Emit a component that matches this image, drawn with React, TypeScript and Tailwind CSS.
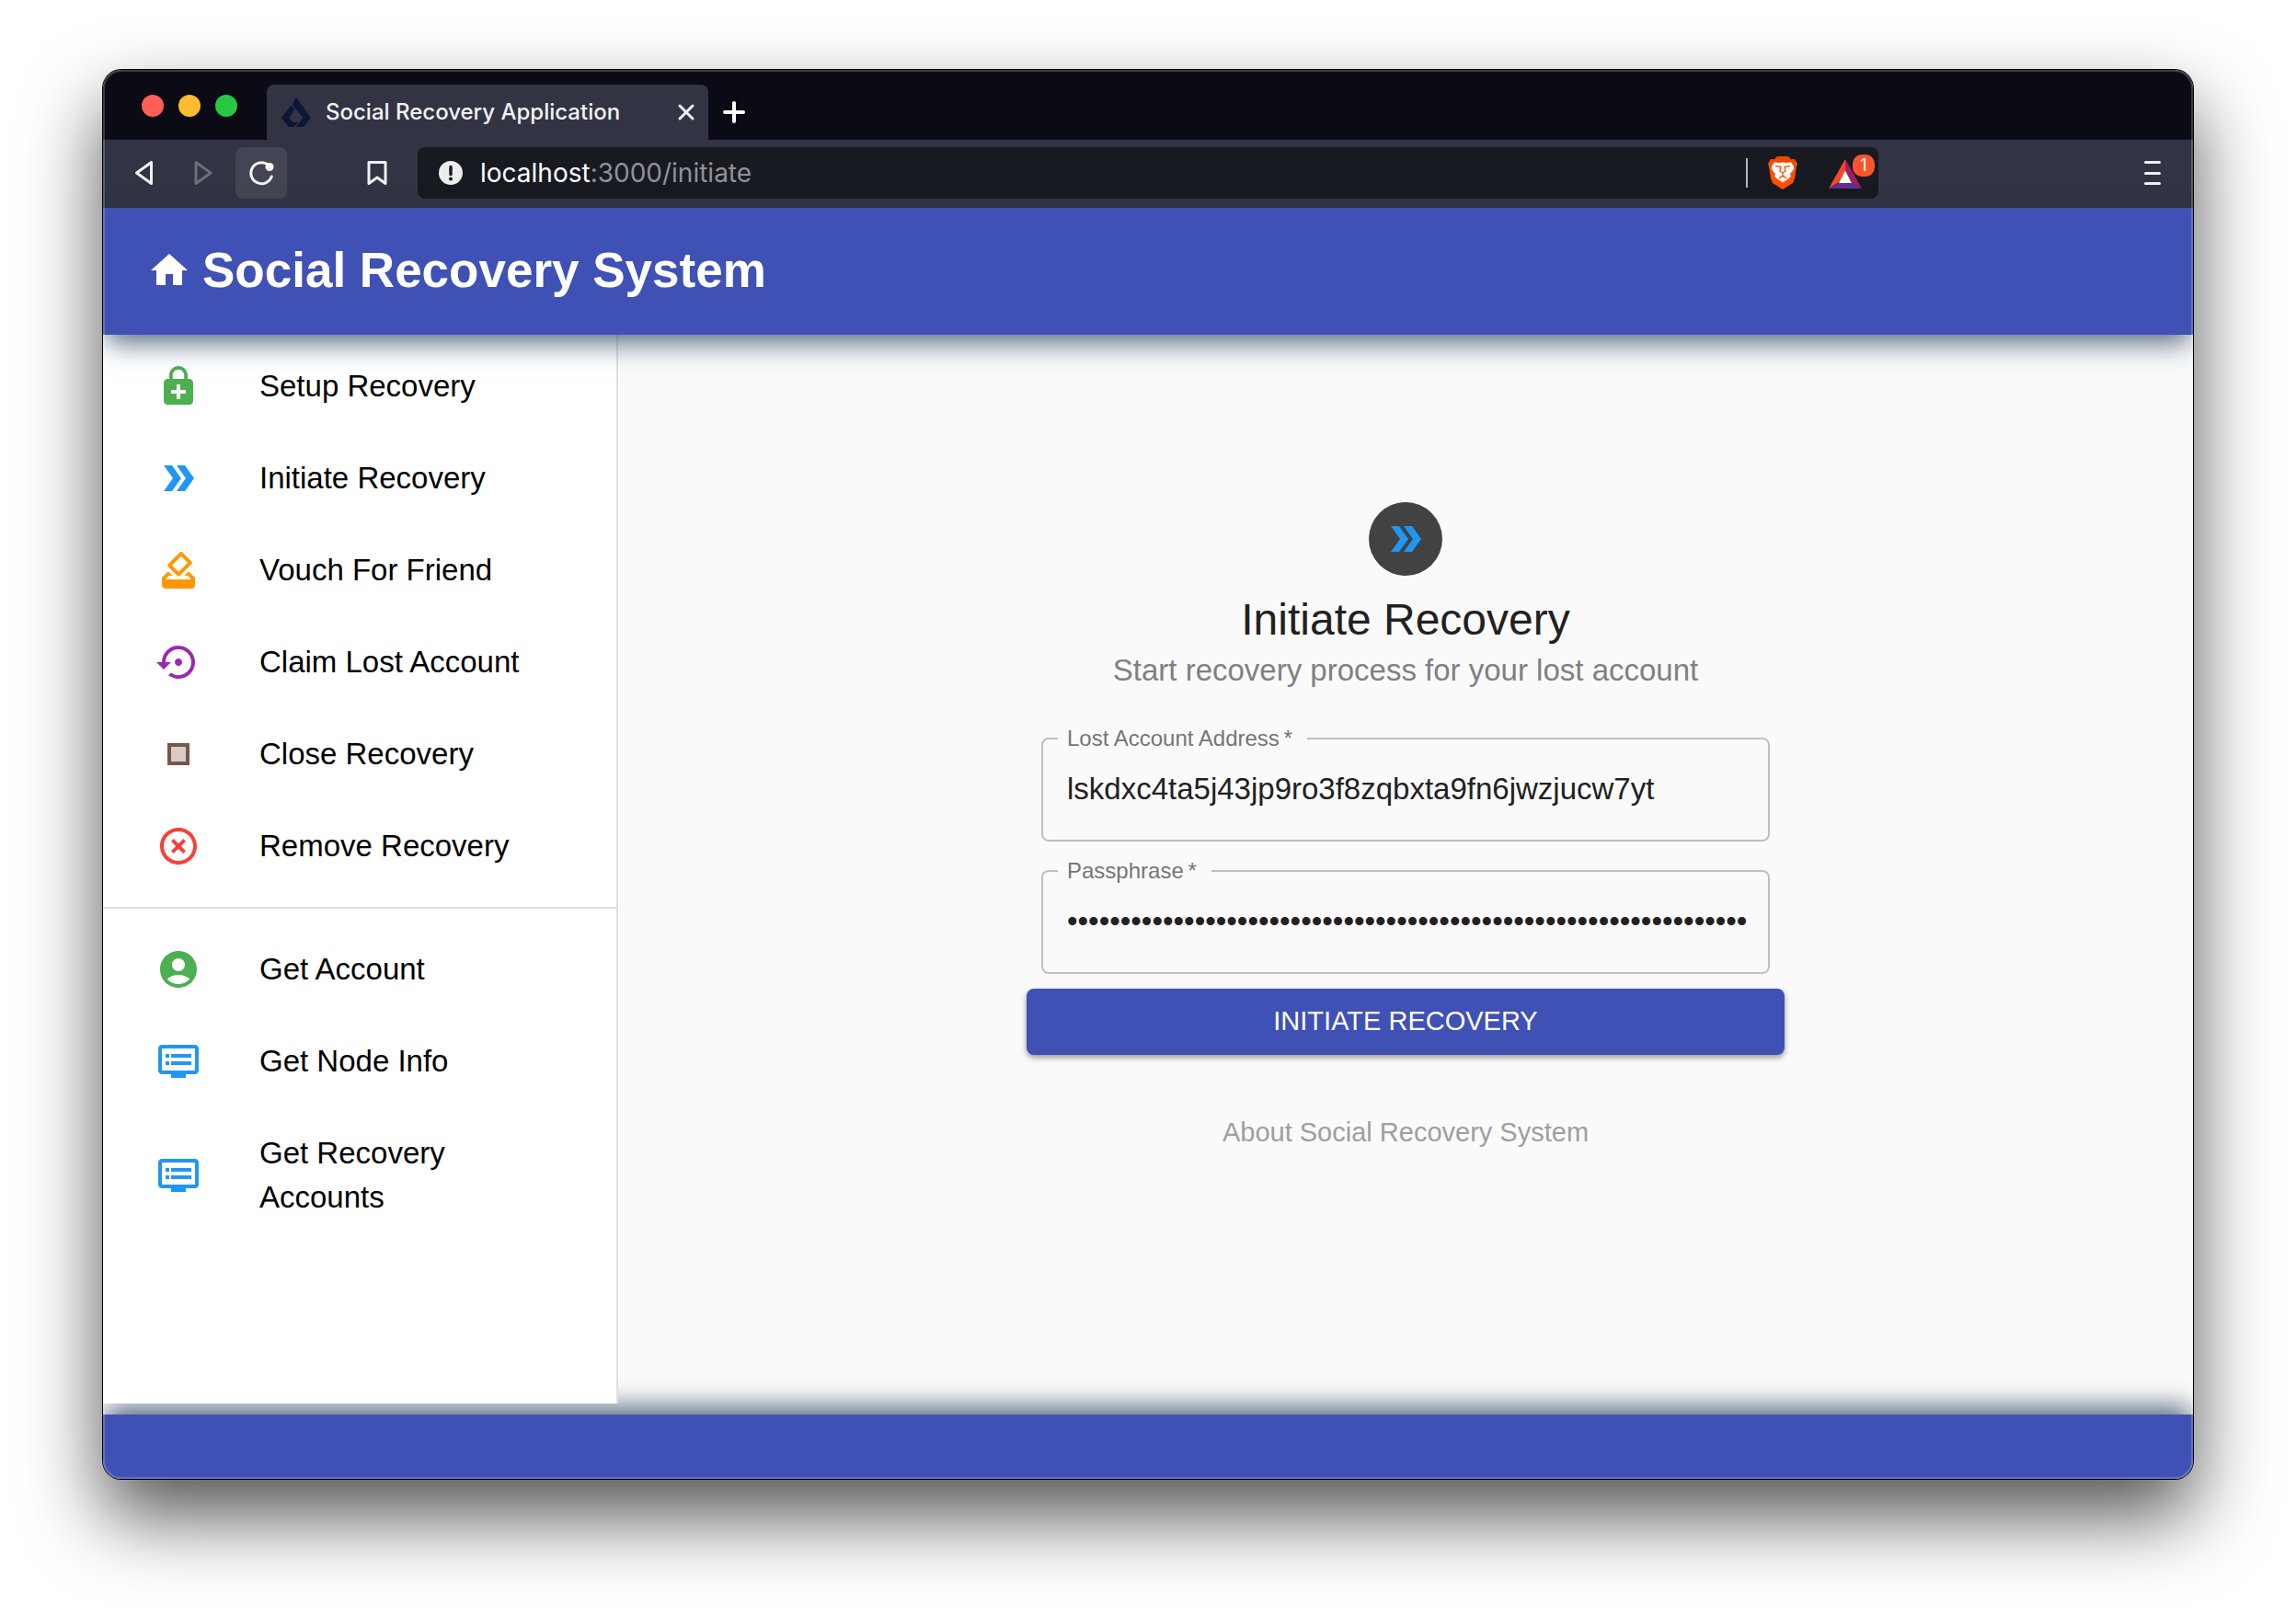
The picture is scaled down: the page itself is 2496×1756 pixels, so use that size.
import { type ReactNode } from "react";
import { MdHome, MdEnhancedEncryption, MdDoubleArrow, MdHowToVote, MdSettingsBackupRestore, MdHighlightOff, MdAccountCircle, MdDvr } from "react-icons/md";

function StopTwoTone() {
  return (
    <svg viewBox="0 0 24 24" className="size-12" aria-hidden="true">
      <path d="M8 8h8v8H8z" fill="#d7ccc8" />
      <path d="M6 18h12V6H6v12zM8 8h8v8H8V8z" fill="#795548" />
    </svg>
  );
}

const actions: { label: string; icon: ReactNode }[] = [
  { label: "Setup Recovery", icon: <MdEnhancedEncryption className="size-12 text-[#4caf50]" /> },
  { label: "Initiate Recovery", icon: <MdDoubleArrow className="size-12 text-[#2196f3]" /> },
  { label: "Vouch For Friend", icon: <MdHowToVote className="size-12 text-[#ff9800]" /> },
  { label: "Claim Lost Account", icon: <MdSettingsBackupRestore className="size-12 text-[#9c27b0]" /> },
  { label: "Close Recovery", icon: <StopTwoTone /> },
  { label: "Remove Recovery", icon: <MdHighlightOff className="size-12 text-[#f44336]" /> },
];

const queries: { label: string; icon: ReactNode }[] = [
  { label: "Get Account", icon: <MdAccountCircle className="size-12 text-[#4caf50]" /> },
  { label: "Get Node Info", icon: <MdDvr className="size-12 text-[#2196f3]" /> },
  { label: "Get Recovery Accounts", icon: <MdDvr className="size-12 text-[#2196f3]" /> },
];

function NavList({ items }: { items: { label: string; icon: ReactNode }[] }) {
  return (
    <ul>
      {items.map((item) => (
        <li key={item.label}>
          <a href="#" className="flex items-center py-[26px] pr-8 pl-[58px] text-[33px] leading-[48px] text-black">
            <span className="w-28 shrink-0">{item.icon}</span>
            <span className="max-w-[300px]">{item.label}</span>
          </a>
        </li>
      ))}
    </ul>
  );
}

function Field({ id, label, type, value }: { id: string; label: string; type: string; value: string }) {
  return (
    <fieldset className="h-[124px] rounded-lg border-2 border-[#bfbfbf] px-4">
      <legend className="h-6 pr-4 pl-[10px] text-2xl leading-6 text-[#757575]">
        <label htmlFor={id}>{label}&thinsp;*</label>
      </legend>
      <input
        id={id}
        type={type}
        defaultValue={value}
        className="h-[86px] w-full bg-transparent pl-[10px] text-[33px] text-[#212121] outline-none"
      />
    </fieldset>
  );
}

function TabStrip() {
  return (
    <div className="flex h-[76px] items-end bg-[#0b0b15]">
      <div className="flex w-[178px] shrink-0 gap-4 self-center pt-0.5 pl-[42px]">
        <button aria-label="Close window" className="size-6 rounded-full bg-[#ff5f57]" />
        <button aria-label="Minimize window" className="size-6 rounded-full bg-[#febc2e]" />
        <button aria-label="Zoom window" className="size-6 rounded-full bg-[#28c840]" />
      </div>
      <div className="flex h-[60px] w-[480px] items-center rounded-t-lg bg-[#323443] pr-3 pl-4">
        <svg viewBox="0 0 32 32" className="size-8" fill="#0b1638" aria-hidden="true">
          <path d="M10 9L0 22l8 10h5.500l5-5H12.500L8.500 22l6-9.500z" />
          <path d="M16 0l16 22-8 10h-8.500L23.500 22 11.500 7.500z" />
        </svg>
        <span className="ml-4 grow font-[Inter] text-2xl font-medium text-[#f2f2f4]">Social Recovery Application</span>
        <button aria-label="Close tab" className="flex size-6 items-center justify-center">
          <svg viewBox="0 0 24 24" className="size-6" stroke="#f2f2f4" strokeWidth="3" strokeLinecap="round" aria-hidden="true">
            <path d="M5 5l14 14M19 5L5 19" />
          </svg>
        </button>
      </div>
      <button aria-label="New tab" className="mb-[18px] ml-4 size-6">
        <svg viewBox="0 0 24 24" className="size-6" stroke="#fff" strokeWidth="4" strokeLinecap="round" aria-hidden="true">
          <path d="M12 2v20M2 12h20" />
        </svg>
      </button>
    </div>
  );
}

function Toolbar() {
  return (
    <div className="flex h-[74px] items-center bg-[#323443] pr-[35px] pb-0.5 pl-[30px]">
      <button aria-label="Back" className="size-[30px]">
        <svg viewBox="0 0 30 30" className="size-[30px]" fill="none" stroke="#f0f0f2" strokeWidth="3" strokeLinejoin="round" aria-hidden="true">
          <path d="M22.500 3.500v23L6.500 15z" />
        </svg>
      </button>
      <button aria-label="Forward" disabled className="ml-[34px] size-[30px]">
        <svg viewBox="0 0 30 30" className="size-[30px]" fill="none" stroke="#6d6e79" strokeWidth="3" strokeLinejoin="round" aria-hidden="true">
          <path d="M7 3.500v23L23 15z" />
        </svg>
      </button>
      <button aria-label="Reload" className="ml-5 flex size-14 items-center justify-center rounded-lg bg-[#434553]">
        <svg viewBox="0 0 28 28" className="size-7" fill="none" stroke="#f5f5f5" strokeWidth="3" strokeLinecap="round" aria-hidden="true">
          <path d="M20.500 4.500A11.500 11.500 0 1 0 25.200 18" />
          <circle cx="23" cy="7.500" r="4.500" fill="#f5f5f5" stroke="none" />
        </svg>
      </button>
      <button aria-label="Bookmark this page" className="ml-[83px] size-[30px]">
        <svg viewBox="0 0 30 30" className="size-[30px]" fill="none" stroke="#f0f0f2" strokeWidth="3" strokeLinejoin="round" aria-hidden="true">
          <path d="M6 3.500h18v23l-9-6.500-9 6.500z" />
        </svg>
      </button>
      <div className="ml-[29px] flex h-14 max-w-[1588px] grow items-center rounded-lg bg-[#181a21] pr-1 pl-[23px] font-[Inter] text-[28px]">
        <svg viewBox="0 0 26 26" className="size-[26px]" aria-hidden="true">
          <circle cx="13" cy="13" r="13" fill="#ececec" />
          <path d="M13 6.500v8" stroke="#181a21" strokeWidth="3.500" strokeLinecap="round" />
          <circle cx="13" cy="19.500" r="2" fill="#181a21" />
        </svg>
        <p className="ml-[19px] grow text-[#919297]">
          <span className="text-white">localhost</span>:3000/initiate
        </p>
        <span className="h-8 w-0.5 bg-[#b5b6b9]" />
        <button aria-label="Brave Shields" className="ml-[22px] h-9 w-8">
          <BraveLion />
        </button>
        <button aria-label="Brave Rewards, 1 notification" className="relative ml-[34px] h-9 w-[50px]">
          <svg viewBox="0 0 36 32" className="mt-0.5 h-8 w-9" aria-hidden="true">
            <path d="M18 0v13l-7 12L0 32z" fill="#ff4724" />
            <path d="M18 0v13l7 12 11 7z" fill="#9e1f63" />
            <path d="M11 25h14l11 7H0z" fill="#662d91" />
            <path d="M18 12.500L25 26H11z" fill="#fff" />
          </svg>
          <span className="absolute -top-0.5 right-0 flex size-6 items-center justify-center rounded-[10px] bg-[#fb542b] text-lg text-white">1</span>
        </button>
      </div>
      <button aria-label="Menu" className="ml-auto flex h-[26px] w-[18px] flex-col justify-between">
        <span className="h-[3px] w-full rounded-full bg-[#f0f0f2]" />
        <span className="h-[3px] w-full rounded-full bg-[#f0f0f2]" />
        <span className="h-[3px] w-full rounded-full bg-[#f0f0f2]" />
      </button>
    </div>
  );
}

function BraveLion() {
  return (
    <svg viewBox="0 0 32 36" className="h-9 w-8" aria-hidden="true">
      <path d="M10 0h12l3 3.500 4-.5 3 5-1 3-2 13-2 5-11 7-11-7-2-5L1 11 0 8l3-5 4 .5z" fill="#ff5000" />
      <path d="M10 0h12l3 3.500 4-.5 2 4-7-1-8 .5L8 6 1 7l2-4 4 .5z" fill="#e84a00" />
      <path d="M4 11l3-4.500 5 .5 4-.5 4 .5 5-.5 3 4.500v3l-4 5 1 3-4 3-5-3-5 3-4-3 1-3-4-5z" fill="#fff" />
      <path d="M16 22.500l5 2.500-5 3.500L11 25z" fill="#fff" />
      <path d="M8 10.500l6 .8-1 4.700 3 2 3-2-1-4.700 6-.8M16 18v3l-4 2.500M16 21l4 2.500" fill="none" stroke="#ff5000" strokeWidth="1.400" />
    </svg>
  );
}

export default function App() {
  return (
    <div className="flex min-h-screen flex-col bg-white px-28 pt-[76px] pb-[148px] font-['Liberation_Sans',Arial,sans-serif]">
      <div className="relative flex grow flex-col overflow-hidden rounded-[20px] shadow-[0_0_0_1px_#000,0_40px_84px_rgba(0,0,0,0.680)]">
        <TabStrip />
        <Toolbar />
        <header className="z-20 flex h-[138px] items-center bg-[#3f51b5] px-12 pb-0.5 text-white shadow-[0_12px_28px_-4px_rgba(24,49,83,0.750)]">
          <a href="#" className="flex items-center gap-3">
            <MdHome className="size-12" />
            <h1 className="pb-0.5 text-[53px] leading-none font-bold">Social Recovery System</h1>
          </a>
        </header>
        <div className="flex grow bg-[#fafafa]">
          <nav aria-label="Recovery" className="z-10 mb-3 w-[560px] shrink-0 border-r-2 border-[#e0e0e0] bg-white pt-1.5">
            <NavList items={actions} />
            <hr className="my-4 border-t-2 border-[#e0e0e0]" />
            <NavList items={queries} />
          </nav>
          <main className="flex grow flex-col items-center pt-[182px]">
            <span className="flex size-20 items-center justify-center rounded-full bg-[#424242]">
              <MdDoubleArrow className="size-12 text-[#2196f3]" />
            </span>
            <h2 className="mt-4 text-5xl leading-[64px] text-[#212121]">Initiate Recovery</h2>
            <p className="text-[33px] leading-[46px] text-[#808080]">Start recovery process for your lost account</p>
            <form className="mt-[39px] flex w-[824px] flex-col" onSubmit={(e) => e.preventDefault()}>
              <div className="flex flex-col gap-5 px-4">
                <Field id="address" label="Lost Account Address" type="text" value="lskdxc4ta5j43jp9ro3f8zqbxta9fn6jwzjucw7yt" />
                <Field id="passphrase" label="Passphrase" type="password" value={"x".repeat(64)} />
              </div>
              <button type="submit" className="mt-4 h-[72px] rounded-lg bg-[#3f51b5] text-[29px] text-white uppercase shadow-[0_3px_6px_rgba(0,0,0,0.400)]">
                Initiate Recovery
              </button>
            </form>
            <a href="#" className="mt-16 text-[29px] leading-10 text-[#9e9e9e]">About Social Recovery System</a>
          </main>
        </div>
        <footer className="z-[5] h-[70px] bg-[#3f51b5] shadow-[0_-12px_28px_-4px_rgba(24,49,83,0.750)]" />
        <div className="pointer-events-none absolute inset-0 z-30 rounded-[20px] border-2 border-white/20" />
      </div>
    </div>
  );
}
